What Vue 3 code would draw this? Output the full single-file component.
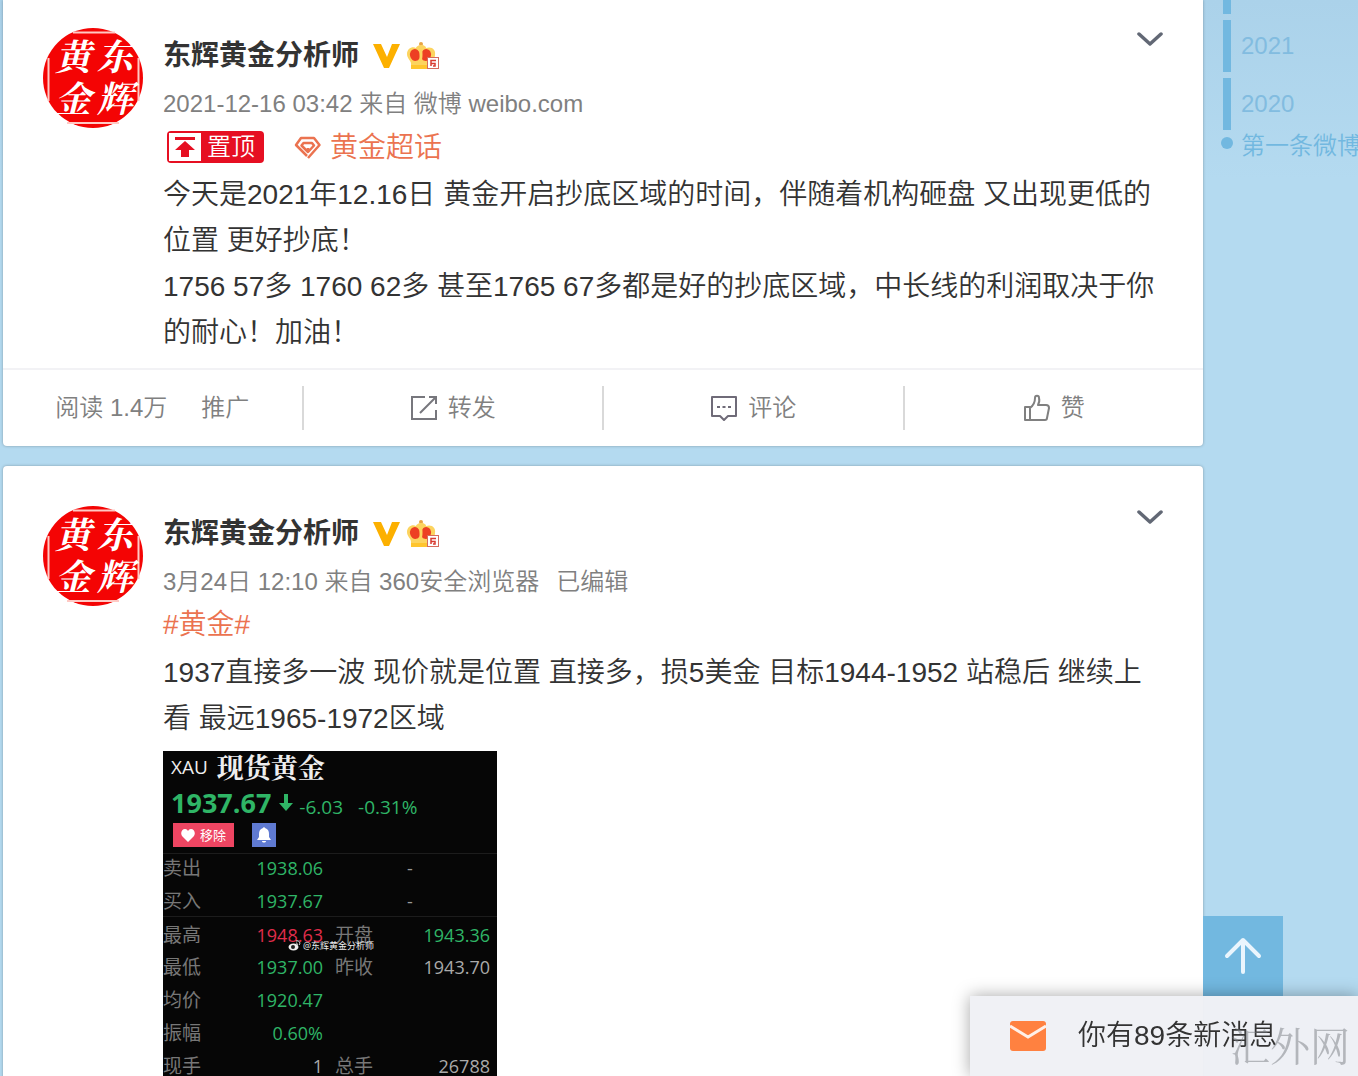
<script setup>
import { ref } from 'vue'

const years = ref(['2021', '2020'])

const posts = ref([
  {
    id: 1,
    name: '东辉黄金分析师',
    time: '2021-12-16 03:42',
    source: '微博 weibo.com',
    pinned: true,
    superTopic: '黄金超话',
    lines: [
      '今天是2021年12.16日 黄金开启抄底区域的时间，伴随着机构砸盘 又出现更低的位置 更好抄底！',
      '1756 57多 1760 62多 甚至1765 67多都是好的抄底区域，中长线的利润取决于你的耐心！加油！'
    ],
    reads: '1.4万'
  },
  {
    id: 2,
    name: '东辉黄金分析师',
    time: '3月24日 12:10',
    source: '360安全浏览器',
    edited: true,
    tag: '#黄金#',
    lines: [
      '1937直接多一波 现价就是位置 直接多，损5美金 目标1944-1952 站稳后 继续上看 最远1965-1972区域'
    ],
    quote: true
  }
])

// 行情表格
const quoteRows = [
  { label: '卖出', value: '1938.06', color: 'green', dash: true },
  { label: '买入', value: '1937.67', color: 'green', dash: true, short: true },
  { label: '最高', value: '1948.63', color: 'red', label2: '开盘', value2: '1943.36', color2: 'green', line: true },
  { label: '最低', value: '1937.00', color: 'green', label2: '昨收', value2: '1943.70', color2: 'gray' },
  { label: '均价', value: '1920.47', color: 'green' },
  { label: '振幅', value: '0.60%', color: 'green' },
  { label: '现手', value: '1', color: 'gray', label2: '总手', value2: '26788', color2: 'gray' }
]

function toTop() {
  window.scrollTo({ top: 0, behavior: 'smooth' })
}
</script>

<template>
  <div class="page">
    <main class="feed">
      <article v-for="post in posts" :key="post.id" class="card">
        <div class="card-main">
          <a href="#" class="avatar" :aria-label="post.name">
            <svg viewBox="0 0 100 100" width="100" height="100">
              <circle cx="50" cy="50" r="50" fill="#f40404" />
              <path d="M30 4.500H72M24 95H76M5.500 30V73M95.500 30V73" stroke="#ffc9c4" stroke-width="2" fill="none" />
              <g class="seal-text">
                <text x="12" y="42">黄</text>
                <text x="54" y="42">东</text>
                <text x="12" y="84">金</text>
                <text x="54" y="84">辉</text>
              </g>
            </svg>
          </a>

          <div class="content">
            <header class="name-row">
              <a href="#" class="name">{{ post.name }}</a>
              <svg class="vip" width="28" height="26" viewBox="0 0 28 26">
                <path d="M0 1H8L14 14L19 1H27L16 25H11Z" fill="#fcb000" />
              </svg>
              <svg class="crown" width="34" height="30" viewBox="0 0 34 30">
                <circle cx="15" cy="3" r="2" fill="#e8a544" />
                <path d="M15 4C19 4 20 6 20 7C26 5 30 9 29 14C29 18 26 20 26 23V28H5V23C5 19 1 18 1 13C1 8 6 5 10 7C10 6 12 4 15 4Z" fill="#fcd45f" />
                <ellipse cx="9" cy="14" rx="5" ry="6" fill="#ed3f23" transform="rotate(-12 9 14)" />
                <ellipse cx="20" cy="14" rx="5" ry="6" fill="#ed3f23" transform="rotate(12 20 14)" />
                <path d="M15 6C17 9 17 17 15 22C13 17 13 9 15 6Z" fill="#fcd45f" />
                <path d="M5 24H25V28H5Z" fill="#ffc52e" />
                <rect x="21.500" y="16.500" width="11" height="11" fill="#fff" stroke="#d66c5d" />
                <path d="M30 19.500H25V25M25 22.500H29V25H27" fill="none" stroke="#d83b30" stroke-width="1.500" />
              </svg>
            </header>

            <p class="meta">
              <span>{{ post.time }} 来自 {{ post.source }}</span>
              <span v-if="post.edited">已编辑</span>
            </p>

            <div class="tag-row">
              <span v-if="post.pinned" class="pinned">
                <svg width="32" height="28" viewBox="0 0 32 28">
                  <rect width="32" height="28" fill="#fff" />
                  <path d="M6 4H26V7H6Z M16 8L26 17H20V24H12V17H6Z" fill="#e60f22" />
                </svg>
                <span>置顶</span>
              </span>
              <a v-if="post.superTopic" href="#" class="topic">
                <svg width="28" height="24" viewBox="0 0 28 24" fill="none" stroke="#eb7350" stroke-width="2.500">
                  <path d="M13 20L2 9L7 2H20L25.500 9L14 22" stroke-linejoin="round" />
                  <path d="M14 16L7.500 9.500L9.500 7H18L20 9.500L14 16V12" stroke-linejoin="round" />
                </svg>
                <span>{{ post.superTopic }}</span>
              </a>
              <a v-if="post.tag" href="#">{{ post.tag }}</a>
            </div>

            <p v-for="(line, i) in post.lines" :key="i" class="text">{{ line }}</p>

            <div v-if="post.quote" class="quote">
              <div class="quote-title">
                <span>XAU</span>
                <strong>现货黄金</strong>
              </div>
              <div class="quote-price green">
                <strong>1937.67</strong>
                <svg width="14" height="18" viewBox="0 0 14 18">
                  <path d="M5 0H9V9H14L7 17L0 9H5Z" fill="#2fb566" />
                </svg>
                <span>-6.03</span>
                <span class="percent">-0.31%</span>
              </div>
              <div class="quote-actions">
                <button type="button" class="remove">
                  <svg width="14" height="13" viewBox="0 0 14 13">
                    <path d="M7 13L1 7C-1 4 1 0 4 0C6 0 7 2 7 2C7 2 8 0 10 0C13 0 15 4 13 7Z" fill="#fff" />
                  </svg>
                  <span>移除</span>
                </button>
                <button type="button" class="bell" aria-label="提醒">
                  <svg width="14" height="16" viewBox="0 0 14 16">
                    <path d="M6 1C6 0 8 0 8 1C11 2 12 4 12 7V10L14 13H0L2 10V7C2 4 3 2 6 1ZM5 14H9C9 16 5 16 5 14Z" fill="#fff" />
                  </svg>
                </button>
              </div>
              <table>
                <tbody>
                  <tr v-for="row in quoteRows" :key="row.label" :class="{ line: row.line, short: row.short }">
                    <th scope="row">{{ row.label }}</th>
                    <td :class="row.color">{{ row.value }}</td>
                    <td v-if="row.dash" colspan="2" class="dash">-</td>
                    <template v-else>
                      <th class="second">{{ row.label2 }}</th>
                      <td class="last" :class="row.color2">{{ row.value2 }}</td>
                    </template>
                  </tr>
                </tbody>
              </table>
              <span class="signature">
                <svg width="13" height="11" viewBox="0 0 13 11">
                  <ellipse cx="5.500" cy="7" rx="5" ry="3.500" fill="#eee" />
                  <circle cx="5" cy="7" r="2" fill="#222" />
                  <path d="M8 1C11 0 13 3 11 5M8 3C9 3 10 4 9 5" stroke="#eee" fill="none" />
                </svg>
                <span>@东辉黄金分析师</span>
              </span>
            </div>
          </div>

          <button type="button" class="more" aria-label="更多">
            <svg width="26" height="18" viewBox="0 0 26 18" fill="none" stroke="#626875" stroke-width="3.500" stroke-linecap="round" stroke-linejoin="round">
              <path d="M2 5L13 15L24 5" />
            </svg>
          </button>
        </div>

        <footer v-if="post.reads" class="actions">
          <div class="action reads">
            <span>阅读 {{ post.reads }}</span>
            <a href="#">推广</a>
          </div>
          <button type="button" class="action">
            <svg width="28" height="26" viewBox="0 0 28 26" fill="none" stroke="#77777d" stroke-width="2">
              <path d="M15 2H2V24H26V15M10 18L26 2M19 2H26V9" />
            </svg>
            <span>转发</span>
          </button>
          <button type="button" class="action">
            <svg width="28" height="26" viewBox="0 0 28 26" fill="none" stroke="#6f6b78" stroke-width="2">
              <path d="M2 2H26V21H18L14 25L10 21H2Z" stroke-linejoin="round" />
              <path d="M7 12H10M12.500 12H15.500M18 12H21" />
            </svg>
            <span>评论</span>
          </button>
          <button type="button" class="action">
            <svg width="28" height="28" viewBox="0 0 28 28" fill="none" stroke="#808080" stroke-width="2" stroke-linejoin="round">
              <path d="M2 13H7V26H2ZM7 14C11 11 12 8 12 4C12 1 16 1 16 4C17 7 16 9 15 11H23C25 11 26 12 26 14L24 24C24 25 23 26 22 26H7" />
            </svg>
            <span>赞</span>
          </button>
        </footer>
      </article>
    </main>

    <aside class="side">
      <ul class="timeline">
        <li class="cut"></li>
        <li v-for="year in years" :key="year"><a href="#">{{ year }}</a></li>
        <li class="first"><a href="#">第一条微博</a></li>
      </ul>
    </aside>

    <div class="dock">
      <button type="button" class="to-top" aria-label="返回顶部" @click="toTop">
        <svg width="40" height="40" viewBox="0 0 40 40" fill="none" stroke="#eaf5fd" stroke-width="4" stroke-linecap="round" stroke-linejoin="round">
          <path d="M20 36V4M4 20L20 4L36 20" />
        </svg>
      </button>
      <a href="#" class="notice">
        <svg width="36" height="32" viewBox="0 0 36 32">
          <rect y="1" width="36" height="30" rx="3" fill="#ff8140" />
          <path d="M0 6L18 17L36 6" fill="none" stroke="#fff0e8" stroke-width="3" />
        </svg>
        <span>你有89条新消息</span>
      </a>
    </div>
    <span class="watermark">汇外网</span>
  </div>
</template>

<style>
body {
  margin: 0;
  background: #b4daf0;
}
</style>

<style scoped>
.page {
  display: flex;
  height: 100vh;
  overflow: hidden;
  padding-left: 3px;
  box-sizing: border-box;
  background: linear-gradient(#abd2ea, #b4daf0 180px);
  font-family: "Liberation Sans", "Noto Sans CJK SC", sans-serif;
  font-weight: 350;
  color: #333;
}

a {
  color: inherit;
  text-decoration: none;
}

button {
  border: 0;
  padding: 0;
  background: none;
  font: inherit;
  color: inherit;
  cursor: pointer;
}

svg {
  display: block;
  flex: none;
}

p {
  margin: 0;
}

.feed {
  flex: 1;
  min-width: 0;
}

.card {
  margin-bottom: 20px;
  background: #fff;
  border-radius: 4px;
  box-shadow: 0 0 3px rgba(0, 0, 0, 0.3);
}

.card:first-child {
  border-radius: 0 0 4px 4px;
}

.card-main {
  display: flex;
  padding: 40px 40px 12px;
}

.card:first-child .card-main {
  padding-top: 28px;
}

.avatar {
  flex: none;
  width: 100px;
  height: 100px;
  margin-right: 20px;
}

.seal-text {
  font-family: "Noto Serif CJK SC", "Noto Sans CJK SC", serif;
  font-size: 36px;
  font-weight: 700;
  font-style: italic;
  fill: #fff;
}

.content {
  flex: 1;
  min-width: 0;
}

.name-row {
  display: flex;
  align-items: center;
  height: 56px;
}

.name {
  font-size: 28px;
  line-height: 56px;
  font-weight: 700;
}

.vip {
  margin-left: 14px;
}

.crown {
  margin-left: 5px;
}

.meta {
  display: flex;
  gap: 17px;
  font-size: 24px;
  line-height: 40px;
  color: #808080;
}

.tag-row {
  display: flex;
  align-items: center;
  height: 48px;
  font-size: 28px;
  line-height: 46px;
  color: #eb7350;
}

.tag-row > a {
  height: 48px;
}

.pinned {
  display: flex;
  align-items: center;
  height: 32px;
  margin: 0 30px 2px 4px;
  padding: 0 9px 0 2px;
  box-sizing: border-box;
  gap: 6px;
  border-radius: 4px;
  background: #e60f22;
  color: #fff;
  font-size: 24px;
  line-height: 32px;
}

.topic {
  display: flex;
  align-items: center;
  gap: 8px;
}

.text {
  font-size: 28px;
  line-height: 46px;
}

.more {
  align-self: flex-start;
  width: 26px;
  height: 20px;
  margin-left: -26px;
}

/* 底部操作栏 */
.actions {
  display: flex;
  height: 76px;
  align-items: center;
  border-top: 2px solid #f2f2f5;
  font-size: 24px;
  line-height: 44px;
  color: #808080;
}

.action {
  display: flex;
  flex: 1;
  height: 44px;
  align-items: center;
  justify-content: center;
  gap: 10px;
}

.action + .action {
  border-left: 2px solid #d9d9d9;
}

.reads {
  gap: 34px;
}

/* 行情图 */
.quote {
  position: relative;
  width: 334px;
  margin-top: 9px;
  background: #060606;
  font-family: "Open Sans", "Noto Sans CJK SC", sans-serif;
  font-size: 18px;
  font-weight: 400;
  color: #eee;
}

.quote-title {
  display: flex;
  align-items: center;
  gap: 9px;
  height: 32px;
  padding-left: 8px;
  font-size: 19px;
  line-height: 30px;
}

.quote-title strong {
  font-family: "Noto Serif CJK SC", "Noto Sans CJK SC", serif;
  font-size: 27px;
  font-weight: 700;
}

.quote-price {
  display: flex;
  align-items: center;
  height: 40px;
  padding-left: 8px;
  font-size: 19px;
  line-height: 36px;
}

.quote-price strong {
  font-size: 27px;
}

.quote-price svg {
  margin: 0 6px 0 8px;
}

.quote-price span {
  padding-top: 8px;
}

.percent {
  margin-left: 15px;
}

.quote-actions {
  display: flex;
  gap: 18px;
  height: 30px;
  padding-left: 10px;
}

.remove,
.bell {
  display: flex;
  align-items: center;
  justify-content: center;
  height: 24px;
  gap: 5px;
  color: #fff;
}

.remove {
  width: 61px;
  background: #ee4562;
  font-size: 13px;
  line-height: 22px;
}

.bell {
  width: 24px;
  background: #5f7ad2;
}

table {
  width: 100%;
  table-layout: fixed;
  border-collapse: collapse;
  border-top: 1px solid #1c1c1c;
}

tr {
  height: 33px;
}

tr.short {
  height: 29px;
}

tr.line {
  height: 37px;
  border-top: 1px solid #1c1c1c;
}

th,
td {
  padding: 0;
  line-height: 29px;
  vertical-align: top;
}

.line th,
.line td {
  padding-top: 4px;
}

th {
  width: 60px;
  text-align: left;
  font-size: 19px;
  font-weight: 400;
  color: #777;
}

td {
  width: 100px;
  text-align: right;
}

td.dash {
  width: 174px;
  text-align: center;
  color: #999;
}

th.second {
  padding-left: 12px;
}

td.last {
  padding-right: 7px;
}

.green {
  color: #2fb566;
}

.red {
  color: #e02d4b;
}

.gray {
  color: #aaa;
}

.signature {
  position: absolute;
  top: 188px;
  left: 125px;
  display: flex;
  align-items: center;
  gap: 2px;
  font-size: 9px;
  line-height: 13px;
  white-space: nowrap;
}

/* 时间轴 */
.side {
  flex: none;
  width: 155px;
  overflow: hidden;
}

.timeline {
  margin: 0;
  padding: 0 0 0 20px;
  list-style: none;
  font-size: 24px;
  color: #82bce0;
  white-space: nowrap;
}

.timeline li {
  height: 52px;
  margin-bottom: 6px;
  padding-left: 10px;
  border-left: 8px solid #72b8e0;
  line-height: 52px;
}

.timeline .cut {
  height: 14px;
}

.timeline .first {
  display: flex;
  align-items: center;
  gap: 8px;
  height: 32px;
  margin: -6px 0 0 -2px;
  padding: 0;
  border: 0;
  line-height: 32px;
  color: #72b8e0;
}

.timeline .first::before {
  content: "";
  flex: none;
  width: 12px;
  height: 12px;
  margin-bottom: 6px;
  border-radius: 50%;
  background: #72b8e0;
}

/* 右下角浮层 */
.dock {
  position: fixed;
  right: 0;
  bottom: 0;
  width: 388px;
}

.to-top {
  display: flex;
  align-items: center;
  justify-content: center;
  width: 80px;
  height: 80px;
  margin-left: 233px;
  background: #72b8e0;
}

.notice {
  position: relative;
  display: flex;
  align-items: center;
  gap: 32px;
  height: 80px;
  padding-left: 40px;
  background: rgba(240, 241, 245, 0.97);
  box-shadow: 0 0 16px rgba(0, 0, 0, 0.35);
  font-size: 28px;
  line-height: 78px;
}

.watermark {
  position: fixed;
  right: 8px;
  bottom: 0;
  font-family: "Noto Serif CJK SC", "Noto Sans CJK SC", serif;
  font-size: 40px;
  font-weight: 400;
  line-height: 64px;
  color: rgba(120, 124, 130, 0.5);
}
</style>
